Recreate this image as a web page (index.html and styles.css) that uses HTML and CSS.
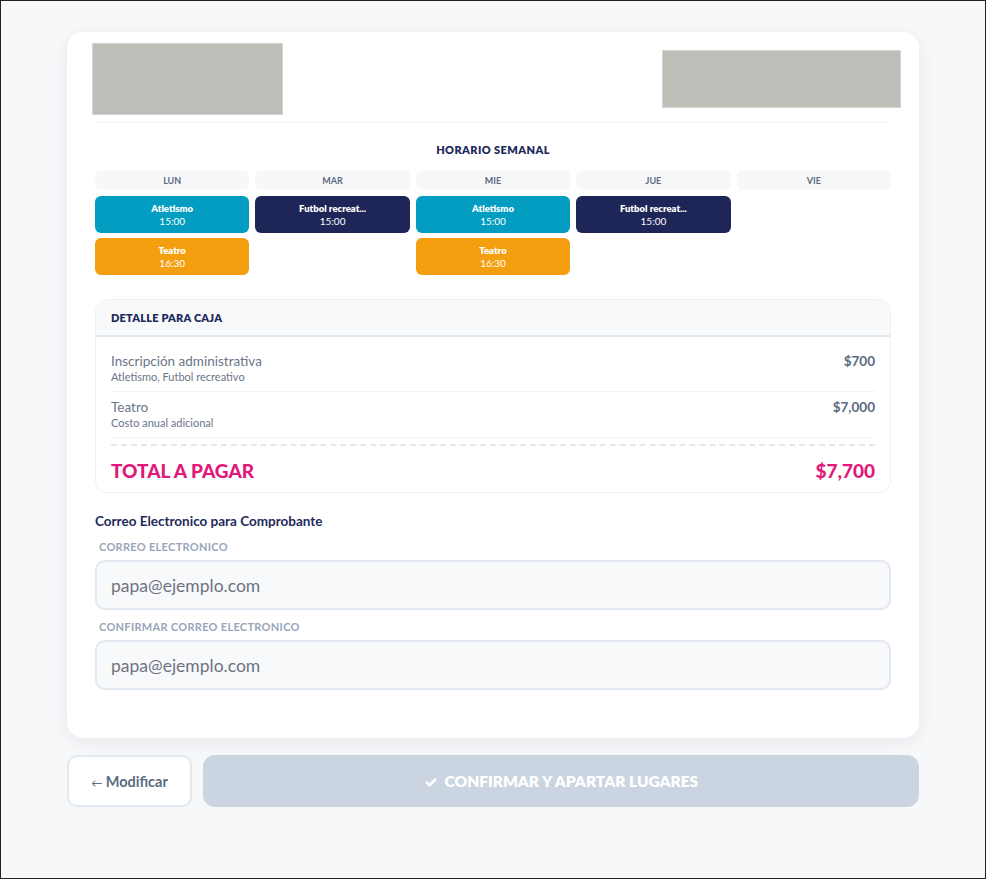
FILE: index.html
```html
<!DOCTYPE html>
<html lang="es">
<head>
    <meta charset="UTF-8">
    <meta name="viewport" content="width=device-width, initial-scale=1.0">
    <title>Confirmar inscripción</title>
    <link rel="stylesheet" href="styles.css">
</head>
<body>
    <div class="wrap">
        <section class="card">
            <header class="card-head">
                <div class="logo logo-left"></div>
                <div class="logo logo-right"></div>
            </header>

            <h2 class="section-title">HORARIO SEMANAL</h2>

            <div class="week">
                <div class="day">
                    <div class="day-name">LUN</div>
                    <div class="event event-blue"><strong>Atletismo</strong><span>15:00</span></div>
                    <div class="event event-orange"><strong>Teatro</strong><span>16:30</span></div>
                </div>
                <div class="day">
                    <div class="day-name">MAR</div>
                    <div class="event event-navy"><strong>Futbol recreat...</strong><span>15:00</span></div>
                </div>
                <div class="day">
                    <div class="day-name">MIE</div>
                    <div class="event event-blue"><strong>Atletismo</strong><span>15:00</span></div>
                    <div class="event event-orange"><strong>Teatro</strong><span>16:30</span></div>
                </div>
                <div class="day">
                    <div class="day-name">JUE</div>
                    <div class="event event-navy"><strong>Futbol recreat...</strong><span>15:00</span></div>
                </div>
                <div class="day">
                    <div class="day-name">VIE</div>
                </div>
            </div>

            <div class="detail">
                <div class="detail-head">DETALLE PARA CAJA</div>
                <div class="detail-body">
                    <div class="line">
                        <div>
                            <div class="line-name">Inscripción administrativa</div>
                            <div class="line-sub">Atletismo, Futbol recreativo</div>
                        </div>
                        <div class="line-price">$700</div>
                    </div>
                    <div class="line">
                        <div>
                            <div class="line-name">Teatro</div>
                            <div class="line-sub">Costo anual adicional</div>
                        </div>
                        <div class="line-price">$7,000</div>
                    </div>
                    <div class="total">
                        <span>TOTAL A PAGAR</span>
                        <span>$7,700</span>
                    </div>
                </div>
            </div>

            <div class="email">
                <h3>Correo Electronico para Comprobante</h3>
                <label class="field-label" for="mail">CORREO ELECTRONICO</label>
                <input class="field" id="mail" type="email" placeholder="papa@ejemplo.com">
                <label class="field-label" for="mail2">CONFIRMAR CORREO ELECTRONICO</label>
                <input class="field" id="mail2" type="email" placeholder="papa@ejemplo.com">
            </div>
        </section>

        <div class="actions">
            <button class="btn-back"><span class="arrow">&larr;</span> Modificar</button>
            <button class="btn-confirm" disabled>&#10003;&nbsp; CONFIRMAR Y APARTAR LUGARES</button>
        </div>
    </div>
</body>
</html>
```

FILE: styles.css
```css
* {
    margin: 0;
    padding: 0;
    box-sizing: border-box;
}

body {
    font-family: 'Lato', 'Inter', sans-serif;
    background-color: #f7f8fa;
    color: #1e2a5a;
    min-height: 100vh;
    border: 1px solid #222;
}

.wrap {
    width: 852px;
    margin: 31px auto 0;
}

.card {
    background: white;
    border-radius: 16px;
    box-shadow: 0 4px 18px rgba(15, 23, 42, 0.07);
    padding: 11px 28px 48px;
}

/* logos hang a little past the content edge */
.card-head {
    display: flex;
    justify-content: space-between;
    align-items: center;
    padding-bottom: 7px;
    border-bottom: 1px solid #f1f3f5;
}

.logo {
    background: #bfbdb8;
    border: 1px solid #d6d4d0;
}

.logo-left {
    width: 191px;
    height: 72px;
    margin-left: -3px;
}

.logo-right {
    width: 239px;
    height: 58px;
    margin-right: -10px;
}

.section-title {
    text-align: center;
    font-size: 11px;
    font-weight: 800;
    letter-spacing: 0.4px;
    margin: 20px 0 14px;
}

.week {
    display: grid;
    grid-template-columns: repeat(5, 1fr);
    gap: 6px;
}

.day {
    display: flex;
    flex-direction: column;
    gap: 5px;
}

.day-name {
    background: #f6f8fa;
    border-radius: 6px;
    height: 20px;
    margin-bottom: 1px;
    display: flex;
    align-items: center;
    justify-content: center;
    font-size: 9px;
    font-weight: 700;
    color: #5c6b80;
}

.event {
    height: 37px;
    border-radius: 6px;
    color: white;
    display: flex;
    flex-direction: column;
    align-items: center;
    justify-content: center;
    line-height: 12px;
}

.event strong {
    font-size: 9.5px;
    font-weight: 800;
}

.event span {
    font-size: 10px;
}

.event-blue { background: #029dc0; }
.event-navy { background: #1e2657; }
.event-orange { background: #f49f0f; }

.detail {
    margin-top: 24px;
    border: 1px solid #eef1f4;
    border-radius: 12px;
    overflow: hidden;
}

.detail-head {
    background: #f7f9fb;
    border-bottom: 2px solid #e2e8f0;
    height: 37px;
    padding: 0 15px;
    display: flex;
    align-items: center;
    font-size: 11px;
    font-weight: 800;
    letter-spacing: 0.2px;
}

.detail-body {
    padding: 9px 15px 10px;
}

.line {
    display: flex;
    justify-content: space-between;
    align-items: flex-start;
    padding: 7px 0 7px;
    border-bottom: 1px solid #f1f3f5;
}

.line-name {
    font-size: 13.5px;
    color: #6b7588;
    line-height: 17px;
}

.line-sub {
    font-size: 11px;
    color: #6b7588;
    line-height: 14px;
}

.line-price {
    font-size: 13.5px;
    font-weight: 700;
    color: #5b6b82;
    line-height: 17px;
}

.total {
    margin-top: 6px;
    border-top: 2px dashed #e2e8f0;
    padding-top: 13px;
    display: flex;
    justify-content: space-between;
    font-size: 19px;
    font-weight: 900;
    color: #e0197a;
}

.email {
    margin-top: 20px;
}

.email h3 {
    font-size: 13.5px;
    font-weight: 700;
    margin-bottom: 11px;
}

.field-label {
    display: block;
    font-size: 11px;
    font-weight: 700;
    color: #98a6bb;
    letter-spacing: 0.3px;
    padding-left: 4px;
    margin-bottom: 7px;
}

.field {
    display: block;
    width: 100%;
    height: 50px;
    background: #f7f9fb;
    border: 2px solid #e2e8f0;
    border-radius: 10px;
    padding: 0 14px;
    font-family: inherit;
    font-size: 17.5px;
    margin-bottom: 10px;
    outline: none;
}

.field:last-child {
    margin-bottom: 0;
}

.field::placeholder {
    color: #6f7380;
}

.actions {
    display: flex;
    gap: 11px;
    margin-top: 17px;
}

.btn-back {
    width: 125px;
    height: 52px;
    background: white;
    border: 2px solid #e2e8f0;
    border-radius: 10px;
    font-family: inherit;
    font-size: 14.5px;
    font-weight: 700;
    color: #5b6b82;
}

.btn-back .arrow {
    font-size: 11px;
    font-weight: 400;
}

.btn-confirm {
    flex: 1;
    height: 52px;
    background: #cbd5e1;
    border: none;
    border-radius: 12px;
    font-family: inherit;
    font-size: 15.5px;
    font-weight: 800;
    color: white;
}
```
